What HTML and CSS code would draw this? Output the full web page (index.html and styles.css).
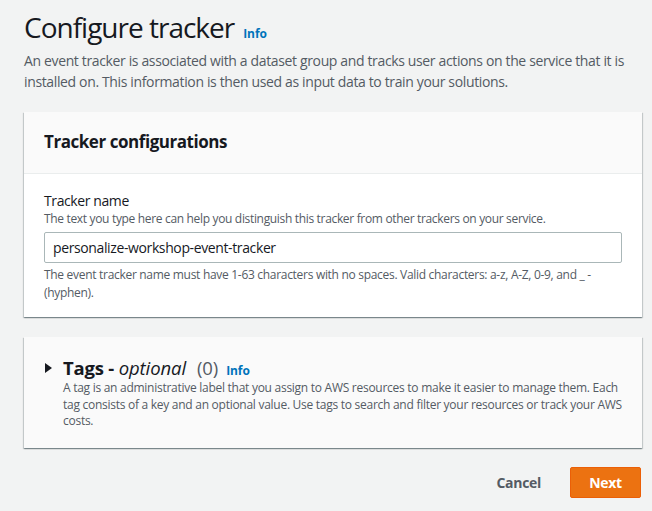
FILE: index.html
```html
<!DOCTYPE html>
<html>
<head>
<meta charset="utf-8">
<link rel="stylesheet" href="styles.css">
</head>
<body>
<div class="page">
  <header class="page-head">
    <div class="title-row">
      <h1 class="title">Configure tracker</h1>
      <a class="info" href="#">Info</a>
    </div>
    <p class="lead">An event tracker is associated with a dataset group and tracks user actions on the service that it is installed on. This information is then used as input data to train your solutions.</p>
  </header>

  <section class="card">
    <div class="card-head">
      <h2 class="card-title">Tracker configurations</h2>
    </div>
    <div class="card-body">
      <label class="label" for="tn">Tracker name</label>
      <div class="hint">The text you type here can help you distinguish this tracker from other trackers on your service.</div>
      <input id="tn" class="input" type="text" value="personalize-workshop-event-tracker">
      <div class="constraint">The event tracker name must have 1-63 characters with no spaces. Valid characters: a-z, A-Z, 0-9, and _ - (hyphen).</div>
    </div>
  </section>

  <section class="card tags">
    <div class="tags-row">
      <svg class="caret" width="7" height="10" viewBox="0 0 7 10"><path d="M0 0 L7 5 L0 10 Z" fill="#16191f"/></svg>
      <div class="tags-text">
        <div class="tags-head">
          <h2 class="tags-title">Tags - <i class="opt">optional</i></h2>
          <span class="count">(0)</span>
          <a class="info" href="#">Info</a>
        </div>
        <p class="tags-desc">A tag is an administrative label that you assign to AWS resources to make it easier to manage them. Each tag consists of a key and an optional value. Use tags to search and filter your resources or track your AWS costs.</p>
      </div>
    </div>
  </section>

  <div class="actions">
    <button class="btn-link">Cancel</button>
    <button class="btn-primary">Next</button>
  </div>
</div>
</body>
</html>
```

FILE: styles.css
```css
html, body {
  margin: 0;
  padding: 0;
  background: #f2f3f3;
}
body {
  font-family: "Open Sans", "Noto Sans", Arial, sans-serif;
  color: #16191f;
}
.page {
  padding: 9px 10px 0 24px;
}
.title-row {
  display: flex;
  align-items: baseline;
  gap: 9px;
}
.title {
  margin: 0;
  font-size: 28px;
  font-weight: 400;
  line-height: 36px;
  letter-spacing: -1px;
  color: #16191f;
}
.info {
  font-size: 12px;
  font-weight: 700;
  line-height: 16px;
  color: #0073bb;
  text-decoration: none;
  letter-spacing: -0.1px;
}
.lead {
  margin: 5px 0 0;
  font-size: 14px;
  line-height: 21px;
  letter-spacing: -0.36px;
  color: #545b64;
}
.card {
  background: #fff;
  margin-top: 20px;
  box-shadow: 0 1px 1px 0 rgba(0,28,36,.3), 1px 1px 1px 0 rgba(0,28,36,.15), -1px 1px 1px 0 rgba(0,28,36,.15);
}
.card-head {
  background: #fafafa;
  border-bottom: 1px solid #eaeded;
  padding: 18px 20px 19px;
}
.card-title {
  margin: 0;
  font-size: 17px;
  font-weight: 700;
  line-height: 24px;
  letter-spacing: -0.45px;
}
.card-body {
  padding: 17px 20px 15px;
}
.label {
  display: block;
  font-size: 14px;
  line-height: 20px;
  letter-spacing: -0.4px;
}
.hint {
  font-size: 12px;
  line-height: 16px;
  letter-spacing: -0.33px;
  color: #545b64;
}
.input {
  display: block;
  box-sizing: border-box;
  width: 100%;
  height: 31px;
  margin-top: 5px;
  padding: 0 8px;
  border: 1px solid #aab7b8;
  border-radius: 2px;
  font-family: inherit;
  font-size: 14px;
  letter-spacing: -0.38px;
  color: #16191f;
  background: #fff;
}
.constraint {
  margin-top: 3px;
  font-size: 12px;
  line-height: 18px;
  letter-spacing: -0.3px;
  color: #545b64;
}
.tags {
  background: #fafafa;
}
.tags-row {
  display: flex;
  gap: 11px;
  padding: 19px 20px 18px 21px;
}
.caret {
  margin-top: 7px;
  flex: none;
}
.tags-head {
  display: flex;
  align-items: baseline;
  height: 23px;
  line-height: 23px;
}
.tags-title {
  margin: 0;
  font-size: 18.5px;
  font-weight: 700;
  line-height: 23px;
  letter-spacing: -0.2px;
}
.opt {
  font-weight: 400;
  letter-spacing: -0.1px;
}
.count {
  margin-left: 11px;
  font-size: 18.5px;
  line-height: 23px;
  color: #545b64;
  letter-spacing: -0.1px;
}
.tags-head .info {
  margin-left: 8px;
}
.tags-desc {
  margin: 1px 0 0;
  font-size: 12px;
  line-height: 16.5px;
  letter-spacing: -0.27px;
  color: #545b64;
}
.actions {
  display: flex;
  justify-content: flex-end;
  align-items: center;
  gap: 12px;
  margin-top: 19px;
}
.btn-link {
  background: none;
  border: none;
  font-family: inherit;
  font-size: 14px;
  font-weight: 700;
  letter-spacing: -0.3px;
  color: #545b64;
  padding: 6px 17px;
}
.btn-primary {
  box-sizing: border-box;
  background: #ec7211;
  border: 1px solid #eb5f07;
  border-radius: 2px;
  color: #fff;
  font-family: inherit;
  font-size: 14px;
  font-weight: 700;
  letter-spacing: -0.3px;
  height: 31px;
  width: 71px;
  padding: 0;
  margin-right: 1px;
}
```
